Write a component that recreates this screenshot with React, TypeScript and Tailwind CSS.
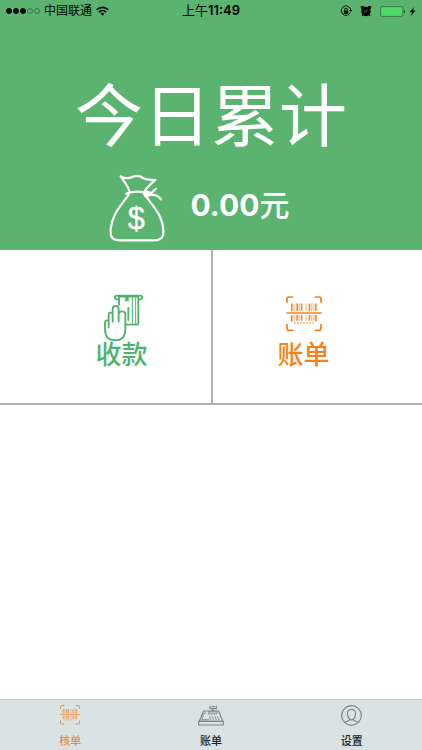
import type { ReactNode } from 'react'
import { clsx } from 'clsx'

type IconProps = { className?: string }

function WifiIcon() {
  return (
    <svg viewBox="0 0 26 20" className="h-[10px] w-[13px]" fill="none" stroke="currentColor" strokeWidth="3.4">
      <path d="M1.5 7.5a16.5 16.5 0 0 1 23 0" />
      <path d="M6 12.3a10 10 0 0 1 14 0" />
      <path d="M13 19.5l-4-4.3a6 6 0 0 1 8 0z" fill="currentColor" stroke="none" />
    </svg>
  )
}

function RotationLockIcon() {
  return (
    <svg viewBox="0 0 24 24" className="h-3 w-3" fill="none" stroke="currentColor" strokeWidth="1.8">
      <path d="M20.5 15.5A9.5 9.5 0 1 1 21.5 11" />
      <path d="M18.5 10h6l-3 4z" fill="currentColor" stroke="none" />
      <rect x="7.5" y="11" width="9" height="6.5" rx="1" fill="currentColor" stroke="none" />
      <path d="M9.3 11V9a2.7 2.7 0 0 1 5.4 0v2" />
    </svg>
  )
}

function AlarmIcon() {
  return (
    <svg viewBox="0 0 24 24" className="h-3 w-3">
      <g fill="currentColor">
        <circle cx="12" cy="13" r="9.5" />
        <circle cx="5" cy="5" r="3.4" />
        <circle cx="19" cy="5" r="3.4" />
        <path d="M5 18l-2 4h4zM19 18l2 4h-4z" />
      </g>
      <path d="M15 9l-3 4.5H8.5" fill="none" stroke="#5ab36f" strokeWidth="1.6" />
    </svg>
  )
}

function BatteryIcon() {
  return (
    <svg viewBox="0 0 75 33" className="h-[11px] w-[25px]">
      <rect x="1.5" y="1.5" width="67" height="30" rx="6" fill="none" stroke="#35683f" strokeWidth="2" />
      <rect x="4" y="4" width="62" height="25" rx="4" fill="#4cd964" />
      <path d="M71 11q4 1 4 5.500t-4 5.500z" fill="#1c3a23" />
    </svg>
  )
}

function BoltIcon() {
  return (
    <svg viewBox="0 0 18 24" className="h-[9px] w-[7px]" fill="currentColor">
      <path d="M13 0L1 14h7l-3 10L17 9h-7z" />
    </svg>
  )
}

function MoneyBagIcon() {
  return (
    <svg
      viewBox="27 27 168 204"
      className="h-[68px] w-14"
      fill="none"
      stroke="currentColor"
      strokeWidth="6.500"
      strokeLinecap="round"
      strokeLinejoin="round"
    >
      <path d="M88 79C84 63 75 53 62 34c14 8 24 7 35 2 13-6 23-3 32 3 12 7 22 5 37 6-13 11-24 20-31 33" />
      <path d="M78 86c20-8 40-7 58-3" />
      <path d="M86 89C68 116 36 146 32 192c-2 27 6 34 30 34h98c25 0 32-10 30-32-3-45-32-72-53-101" />
      <path d="M132 80c7-2 17 1 21 5l15-14M153 85c-5 7-12 10-18 8l-4-10M150 90c14-2 26 3 33 13" />
      <path d="M136 82l14 3-10 6z" fill="currentColor" />
      <text
        x="109"
        y="192"
        textAnchor="middle"
        fill="currentColor"
        strokeWidth="1"
        className="font-['Liberation_Sans',sans-serif] text-[92px]"
      >
        $
      </text>
    </svg>
  )
}

function CollectIcon() {
  return (
    <svg
      viewBox="55 41 126 144"
      className="ml-1 h-12 w-[42px]"
      fill="none"
      stroke="currentColor"
      strokeWidth="5.500"
      strokeLinecap="round"
      strokeLinejoin="round"
    >
      <path d="M99 57h-3c-7 0-7-11 0-11h71c7 0 7 11 0 11h-5" />
      <path d="M103 73V49h58v80q0 4-5 4h-32" />
      <path d="M143 50v81M153 50v81" strokeWidth="3" />
      <path d="M131 83v36" />
      <path d="M123 50h8v13l-4-3-4 3z" fill="currentColor" strokeWidth="2" />
      <path d="M72 136v-32q0-7 6-7t6 7v20M84 124V86q0-9 9-9t9 9v38M102 124v-22q0-9 10-9t10 9v45q0 33-30 33-31 0-31-33v-19q0-8 6-8t5 8v13" />
    </svg>
  )
}

function ScanIcon({ className }: IconProps) {
  return (
    <svg viewBox="68 50 106 106" className={className} fill="none" stroke="currentColor" strokeWidth="5">
      <path
        d="M71 68V58q0-5 5-5h12M154 53h12q5 0 5 5v10M71 134v12q0 5 5 5h12M154 151h12q5 0 5-5v-12"
        strokeLinecap="round"
      />
      <path d="M69 100h104" strokeWidth="4" />
      <path d="M85 72v22M101 72v22M114 72v22M137 72v22M156 72v22" strokeWidth="4.500" />
      <path d="M92 72v22M107 72v22M127 72v22M144 72v22M150 72v22" strokeWidth="2" />
      <path d="M85 106v19M101 106v17M114 106v17M137 106v17M156 106v19" strokeWidth="4.500" />
      <path d="M92 106v17M107 106v17M127 106v17M144 106v17M150 106v17" strokeWidth="2" />
      <path d="M92 129h62" strokeWidth="4" strokeDasharray="4 5" />
    </svg>
  )
}

function RegisterIcon({ className }: IconProps) {
  return (
    <svg viewBox="55 41 78 63" className={className} fill="none" stroke="currentColor" strokeWidth="3.500" strokeLinejoin="round">
      <path d="M91 43v9h19v-9M96 46h10M100 52v7" />
      <path d="M72 59h45l12 31H59z" />
      <path d="M57 90h74v11H57z" />
      <path d="M79 66h-6l-7 19h22" strokeWidth="2.500" />
      <path d="M86 60h26v8H86z" fill="currentColor" fillOpacity="0.400" strokeWidth="2" />
      <path d="M90 75l2 11M98 75l3 11M106 75l4 11M113 75l5 11" strokeWidth="2.500" />
    </svg>
  )
}

function ProfileIcon({ className }: IconProps) {
  return (
    <svg viewBox="64 41 62 62" className={className} fill="none" stroke="currentColor" strokeWidth="3.500">
      <circle cx="95" cy="72" r="29" />
      <path d="M95 54c-9 0-13 6-12 14 1 7 4 13 7 15 3 2 7 2 10 0 3-2 6-8 7-15 1-8-3-14-12-14z" />
      <path d="M90 82c0 7-10 7-16 11M100 82c0 7 10 7 16 11" />
    </svg>
  )
}

const tabs = [
  { label: '核单', icon: <ScanIcon className="h-5 w-5" />, active: true },
  { label: '账单', icon: <RegisterIcon className="h-[21px] w-[26px]" />, active: false },
  { label: '设置', icon: <ProfileIcon className="h-[21px] w-[21px]" />, active: false },
]

function StatusBar() {
  return (
    <div className="grid h-[22px] grid-cols-[1fr_auto_1fr] items-center px-1.5 text-black">
      <div className="flex items-center gap-1">
        <div className="flex gap-px">
          {[true, true, true, false, false].map((filled, i) => (
            <span
              key={i}
              className={clsx('h-1.5 w-1.5 rounded-full border', filled ? 'border-black bg-black' : 'border-[#3a7348]')}
            />
          ))}
        </div>
        <span className="text-xs">中国联通</span>
        <WifiIcon />
      </div>
      <span className="text-[13px]">
        上午<span className="font-semibold">11:49</span>
      </span>
      <div className="flex items-center justify-end gap-1">
        <RotationLockIcon />
        <span className="flex px-1">
          <AlarmIcon />
        </span>
        <BatteryIcon />
        <BoltIcon />
      </div>
    </div>
  )
}

function ActionButton({ label, className, children }: { label: string; className: string; children: ReactNode }) {
  return (
    <button type="button" className={clsx('flex flex-col items-center pt-11 pb-9', className)}>
      <span className="flex h-12 items-start">{children}</span>
      <span className="text-[26px] leading-[25px] font-medium">{label}</span>
    </button>
  )
}

export default function App() {
  return (
    <div className="flex min-h-screen flex-col bg-white font-['Inter','Noto_Sans_CJK_SC',sans-serif]">
      <header className="bg-[#5ab36f] pb-2 text-white">
        <StatusBar />
        <h1 className="pt-[52px] text-center text-[68px] leading-[84px]">今日累计</h1>
        <div className="flex items-center justify-center gap-[26px] pt-4 pr-6">
          <MoneyBagIcon />
          <p className="pb-1.5 text-[30px] leading-9 font-bold">
            0.00<span className="font-medium">元</span>
          </p>
        </div>
      </header>

      <main className="flex-1">
        <div className="grid grid-cols-2 border-b-2 border-[#b0b0b0]">
          <ActionButton label="收款" className="pl-8 text-[#4fb36c]">
            <CollectIcon />
          </ActionButton>
          <ActionButton label="账单" className="border-l-2 border-[#b0b0b0] pr-7 text-[#f5821a]">
            <ScanIcon className="mt-0.5 h-9 w-9" />
          </ActionButton>
        </div>
      </main>

      <nav className="grid grid-cols-3 border-t border-[#c3cbcc] bg-[#d9e3e4]">
        {tabs.map((tab) => (
          <a
            key={tab.label}
            href="#"
            className={clsx('flex h-[50px] flex-col items-center pt-[3px]', tab.active ? 'text-[#f08a35]' : 'text-[#808686]')}
          >
            <span className="flex h-6 items-center">{tab.icon}</span>
            <span className={clsx('pt-1.5 text-[11px] leading-4 font-medium', !tab.active && 'text-[#222]')}>
              {tab.label}
            </span>
          </a>
        ))}
      </nav>
    </div>
  )
}
